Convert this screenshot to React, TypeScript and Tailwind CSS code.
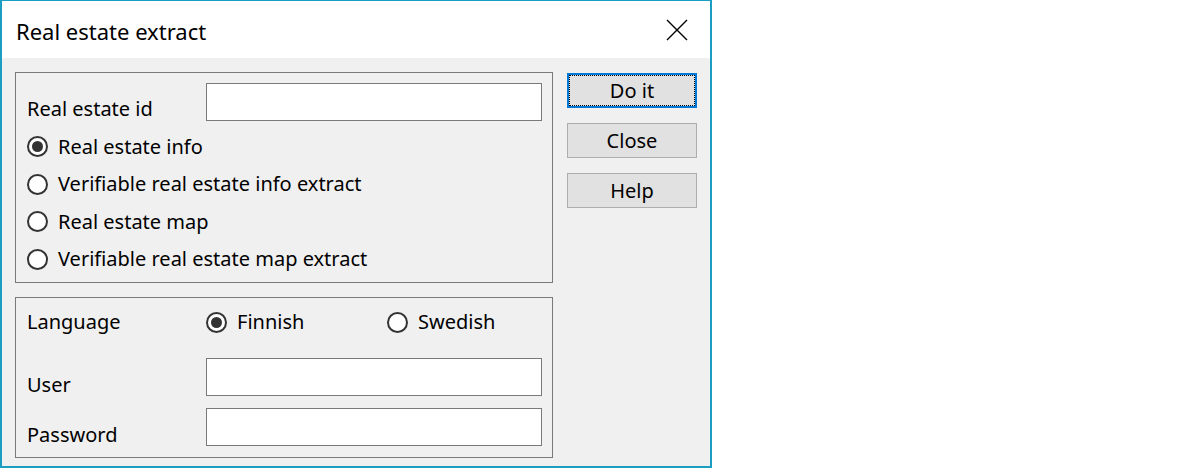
import React, { useState } from 'react';

const font = { fontFamily: '"Segoe UI", "Noto Sans", "Open Sans", sans-serif' };

const Radio = ({ checked, label, onClick }: { checked: boolean; label: string; onClick: () => void }) => (
  <button type="button" onClick={onClick} className="flex items-center gap-[10px] text-[20px] text-black leading-none">
    <span className="w-[21px] h-[21px] rounded-full border-2 border-[#333333] bg-white flex items-center justify-center">
      {checked && <span className="w-[11px] h-[11px] rounded-full bg-[#333333]" />}
    </span>
    <span>{label}</span>
  </button>
);

const Btn = ({ label, focused }: { label: string; focused?: boolean }) => (
  <button
    type="button"
    className={`h-[35px] w-[130px] bg-[#e1e1e1] text-[20px] text-black leading-none flex items-center justify-center ${
      focused ? 'border-2 border-[#0078d7]' : 'border border-[#adadad]'
    }`}
  >
    {focused ? (
      <span className="w-full h-full border border-dotted border-black flex items-center justify-center">{label}</span>
    ) : (
      label
    )}
  </button>
);

export default function App() {
  const [kind, setKind] = useState(0);
  const [lang, setLang] = useState('fi');
  const kinds = ['Real estate info', 'Verifiable real estate info extract', 'Real estate map', 'Verifiable real estate map extract'];

  return (
    <div className="w-[1200px] h-[469px] bg-white" style={font}>
      <div className="w-[712px] h-[468px] border-t border-x-2 border-b-2 border-[#1a9fc3] flex flex-col">
        <div className="h-[57px] bg-white flex items-center justify-between pl-[14px] pr-[22px]">
          <span className="text-[22px] text-black leading-none mt-[3px]">Real estate extract</span>
          <svg width="22" height="22" viewBox="0 0 22 22" className="mt-[1px]">
            <path d="M1 1 L21 21 M21 1 L1 21" stroke="#000" strokeWidth="1.4" fill="none" />
          </svg>
        </div>
        <div className="flex-1 bg-[#f0f0f0] flex pl-[13px] pt-[14px] gap-[14px]">
          <div className="w-[538px] flex flex-col gap-[14px]">
            <div className="h-[211px] border border-[#7a7a7a] pl-[11px] pr-[10px] pt-[10px] flex flex-col">
              <div className="flex items-start">
                <span className="w-[179px] text-[20px] text-black leading-none mt-[16px]">Real estate id</span>
                <input className="w-[336px] h-[38px] bg-white border border-[#7a7a7a] outline-none px-1" />
              </div>
              <div className="flex flex-col pt-[7px]">
                {kinds.map((k, i) => (
                  <div key={k} className="h-[37.5px] flex items-center">
                    <Radio checked={kind === i} label={k} onClick={() => setKind(i)} />
                  </div>
                ))}
              </div>
            </div>
            <div className="h-[161px] border border-[#7a7a7a] pl-[11px] pr-[10px] pt-[9px] flex flex-col">
              <div className="h-[30px] flex items-center">
                <span className="w-[179px] text-[20px] text-black leading-none">Language</span>
                <div className="w-[181px]">
                  <Radio checked={lang === 'fi'} label="Finnish" onClick={() => setLang('fi')} />
                </div>
                <Radio checked={lang === 'sv'} label="Swedish" onClick={() => setLang('sv')} />
              </div>
              <div className="flex items-start mt-[21px]">
                <span className="w-[179px] text-[20px] text-black leading-none mt-[17px]">User</span>
                <input className="w-[336px] h-[38px] bg-white border border-[#7a7a7a] outline-none px-1" />
              </div>
              <div className="flex items-start mt-[12px]">
                <span className="w-[179px] text-[20px] text-black leading-none mt-[17px]">Password</span>
                <input type="password" className="w-[336px] h-[38px] bg-white border border-[#7a7a7a] outline-none px-1" />
              </div>
            </div>
          </div>
          <div className="flex flex-col gap-[15px] mt-px">
            <Btn label="Do it" focused />
            <Btn label="Close" />
            <Btn label="Help" />
          </div>
        </div>
      </div>
    </div>
  );
}
